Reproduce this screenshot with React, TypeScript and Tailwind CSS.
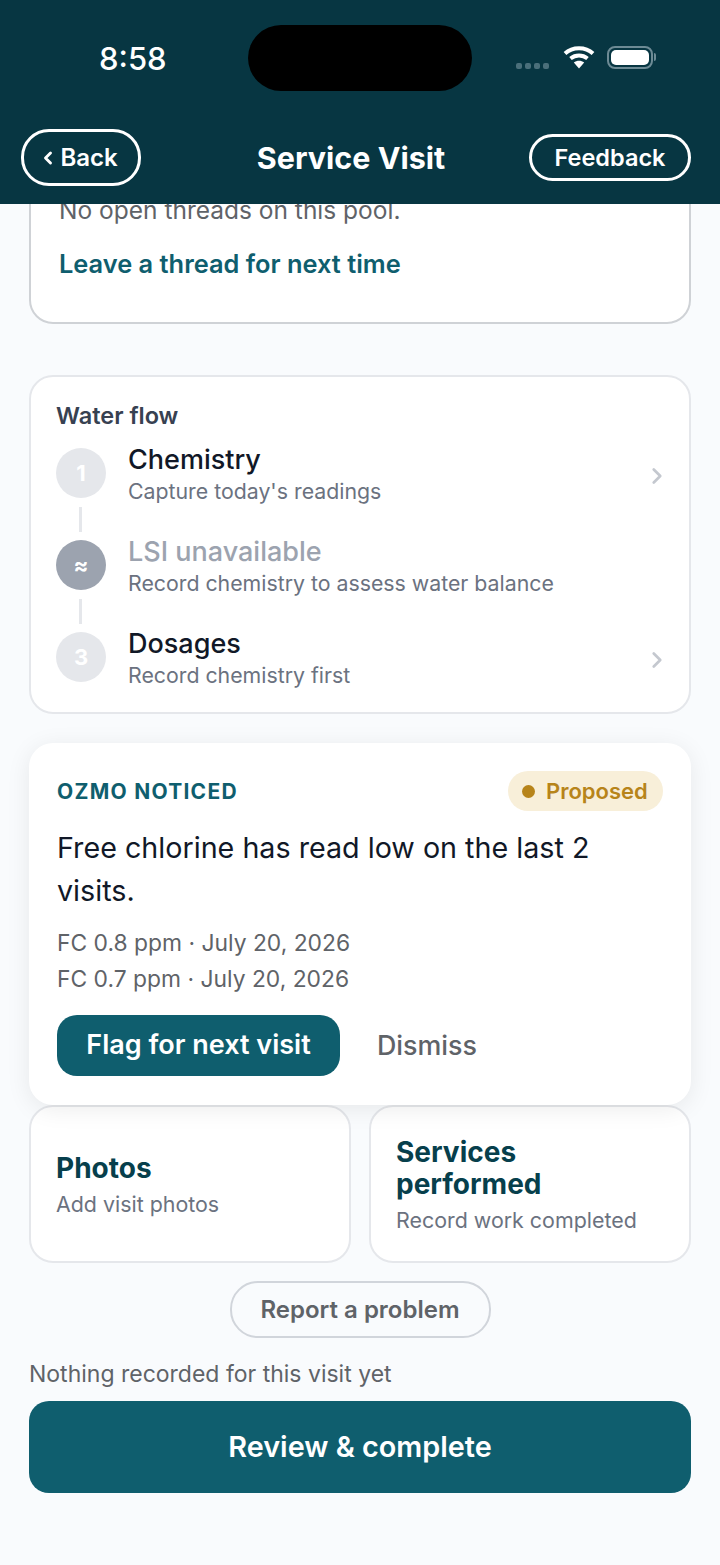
import { ChevronLeft, ChevronRight } from 'lucide-react';

const steps = [
  { mark: '1', title: 'Chemistry', sub: "Capture today's readings", link: true },
  { mark: '≈', title: 'LSI unavailable', sub: 'Record chemistry to assess water balance', link: false },
  { mark: '3', title: 'Dosages', sub: 'Record chemistry first', link: true },
];

function StatusBar() {
  return (
    <div className="relative flex h-[129px] items-start">
      <span className="ml-[99px] mt-[41px] text-[31px] leading-[36px] font-medium text-white">8:58</span>
      <div className="absolute left-[248px] top-[25px] h-[66px] w-[224px] rounded-[33px] bg-black" />
      <div className="absolute left-[516px] top-[45px] flex items-center">
        <div className="flex gap-[3px] pt-[18px]">
          <i className="h-[6px] w-[6px] rounded-[2px] bg-[#4a6f7a]" />
          <i className="h-[6px] w-[6px] rounded-[2px] bg-[#4a6f7a]" />
          <i className="h-[6px] w-[6px] rounded-[2px] bg-[#4a6f7a]" />
          <i className="h-[6px] w-[6px] rounded-[2px] bg-[#4a6f7a]" />
        </div>
        <svg className="ml-[14px]" width="32" height="24" viewBox="0 0 32 24" fill="none">
          <path d="M2 8.5C9.5 1.5 22.5 1.5 30 8.5" stroke="#fff" strokeWidth="4" />
          <path d="M7.5 13.5C12.5 9.5 19.5 9.5 24.5 13.5" stroke="#fff" strokeWidth="4" />
          <path d="M10.8 17.6C14 15 18 15 21.2 17.6L16 23.5Z" fill="#fff" />
        </svg>
        <div className="ml-[12px] flex items-center">
          <div className="h-[23px] w-[46px] rounded-[8px] border-2 border-[#6d8b95] p-[2px]">
            <div className="h-full w-full rounded-[5px] bg-white" />
          </div>
          <div className="ml-px h-[8px] w-[2px] rounded-r-full bg-[#6d8b95]" />
        </div>
      </div>
    </div>
  );
}

function Header() {
  return (
    <header className="relative z-10 h-[204px] shrink-0 bg-[#073642]">
      <StatusBar />
      <div className="flex items-center justify-between pl-[21px] pr-[29px]">
        <button className="flex h-[57px] w-[120px] items-center justify-center rounded-[28px] border-[3px] border-white text-[24px] font-semibold text-white">
          <ChevronLeft className="mr-[2px] ml-[-6px] h-[20px] w-[20px]" strokeWidth={3.5} />
          Back
        </button>
        <h1 className="ml-[32px] text-[30.5px] font-bold text-white">Service Visit</h1>
        <button className="h-[47px] w-[162px] rounded-[24px] border-[3px] border-white text-[23.5px] font-semibold text-white">
          Feedback
        </button>
      </div>
    </header>
  );
}

function WaterFlow() {
  return (
    <section className="mt-[51px] h-[339px] rounded-[24px] border-2 border-[#e5e7eb] bg-white px-[25px] pt-[25px]">
      <h2 className="text-[23.5px] leading-[28px] font-semibold text-[#374151]">Water flow</h2>
      <div className="mt-[18px] flex flex-col">
        {steps.map((s, i) => (
          <div key={s.title}>
            {i > 0 && <div className="ml-[23px] mt-[9px] mb-[8px] h-[25px] w-[3px] bg-[#e5e7eb]" />}
            <div className="flex h-[50px] items-center">
              <div
                className={
                  s.link
                    ? 'flex h-[50px] w-[50px] shrink-0 items-center justify-center rounded-full bg-[#e5e7eb] text-[22px] font-bold text-white'
                    : 'flex h-[50px] w-[50px] shrink-0 items-center justify-center rounded-full bg-[#9ca3af] text-[22px] font-bold text-white'
                }
              >
                {s.mark}
              </div>
              <div className="ml-[22px] mt-[4px] flex-1">
                <div
                  className={
                    s.link
                      ? 'text-[27px] leading-[32px] font-medium text-[#111827]'
                      : 'text-[27px] leading-[32px] font-medium text-[#9ca3af]'
                  }
                >
                  {s.title}
                </div>
                <div className="text-[21.3px] leading-[31px] text-[#6b7280]">{s.sub}</div>
              </div>
              {s.link && <ChevronRight className="mr-[-6px] mt-[6px] h-[26px] w-[26px] text-[#c4c8cf]" strokeWidth={2.5} />}
            </div>
          </div>
        ))}
      </div>
    </section>
  );
}

function Noticed() {
  return (
    <section className="relative z-10 mt-[29px] h-[362px] rounded-[24px] bg-white pl-[28px] pr-[28px] pt-[28px] shadow-[0_4px_24px_rgba(0,0,0,0.08)]">
      <div className="flex items-center justify-between">
        <span className="mt-[2px] text-[21px] font-bold tracking-[0.06em] text-[#0f5e6e]">OZMO NOTICED</span>
        <span className="flex h-[40px] w-[155px] items-center rounded-[20px] bg-[#f8efd9] pl-[14px] text-[22px] font-semibold text-[#b7841a]">
          <i className="mr-[11px] h-[13px] w-[13px] rounded-full bg-[#b7841a]" />
          Proposed
        </span>
      </div>
      <p className="mt-[15px] text-[28.7px] leading-[43px] text-[#111827]">Free chlorine has read low on the last 2 visits.</p>
      <p className="mt-[13px] text-[22.85px] leading-[36px] text-[#5f6368]">
        FC 0.8 ppm · July 20, 2026
        <br />
        FC 0.7 ppm · July 20, 2026
      </p>
      <div className="mt-[18px] flex items-center">
        <button className="h-[61px] w-[283px] rounded-[20px] bg-[#0f5e6e] text-[27px] font-semibold text-white">
          Flag for next visit
        </button>
        <button className="ml-[37px] text-[26.8px] font-medium text-[#5f6368]">Dismiss</button>
      </div>
    </section>
  );
}

function Tile({ title, sub }: { title: string; sub: string }) {
  return (
    <div className="flex h-[158px] flex-col justify-center rounded-[24px] border-2 border-[#e5e7eb] bg-white px-[25px] pt-[2px]">
      <h3 className="text-[28px] leading-[32px] font-bold text-[#073f4c]">{title}</h3>
      <p className="mt-[5px] text-[21.4px] leading-[30px] text-[#6b7280]">{sub}</p>
    </div>
  );
}

export default function App() {
  return (
    <div className="flex h-[1565px] w-[720px] flex-col overflow-hidden bg-[#f9fbfd] font-['Inter',sans-serif]">
      <Header />
      <main className="px-[29px]">
        <section className="mt-[-40px] h-[160px] rounded-[24px] border-2 border-[#cfd2d6] bg-white pl-[29px] pr-[28px] pt-[28px]">
          <p className="ml-[-1px] text-[24.5px] leading-[32px] text-[#5f6368]">No open threads on this pool.</p>
          <p className="ml-[-1px] mt-[22px] text-[25.4px] leading-[32px] font-semibold text-[#0f5e6e]">Leave a thread for next time</p>
        </section>
        <WaterFlow />
        <Noticed />
        <div className="grid grid-cols-2 gap-[18px]">
          <Tile title="Photos" sub="Add visit photos" />
          <Tile title="Services performed" sub="Record work completed" />
        </div>
        <div className="mt-[18px] flex justify-center">
          <button className="h-[57px] w-[261px] rounded-[28px] border-2 border-[#d1d5db] text-[24px] font-semibold text-[#5f6368]">
            Report a problem
          </button>
        </div>
        <p className="mt-[20px] text-[23px] leading-[32px] text-[#5f6368]">Nothing recorded for this visit yet</p>
        <button className="mt-[11px] h-[92px] w-full rounded-[20px] bg-[#0f5e6e] text-[28.8px] font-semibold text-white">
          Review &amp; complete
        </button>
      </main>
    </div>
  );
}
